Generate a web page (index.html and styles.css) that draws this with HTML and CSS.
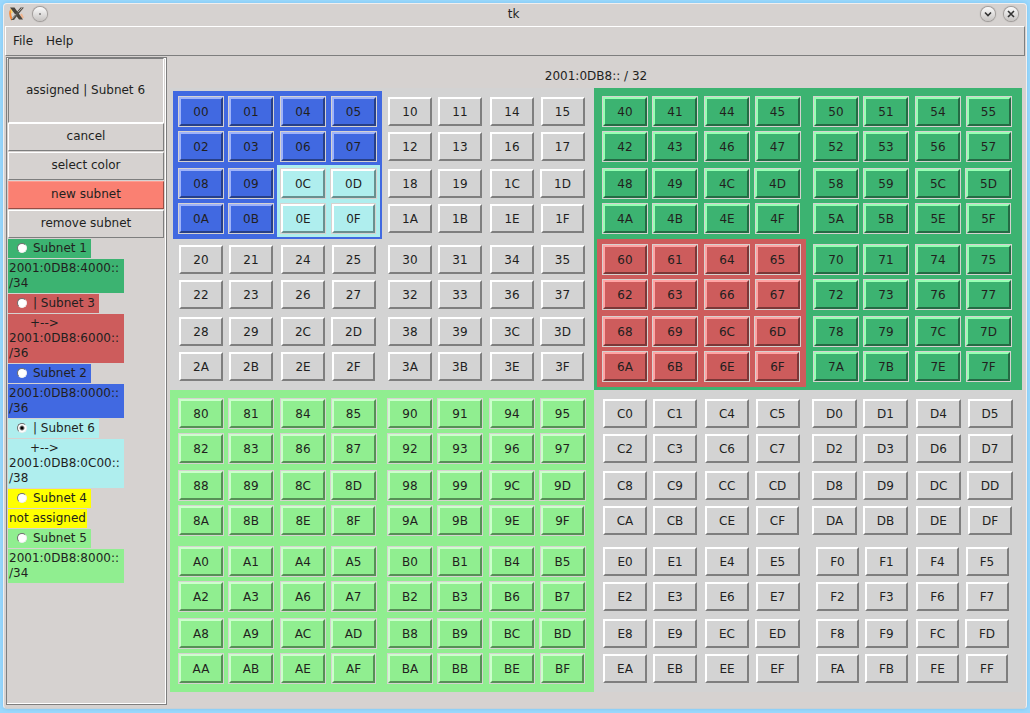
FILE: index.html
```
<!DOCTYPE html>
<html lang="en">
<head>
<meta charset="utf-8">
<title>tk</title>
<link rel="stylesheet" href="styles.css">
</head>
<body>
<div class="window">
  <header class="titlebar">
    <div class="titlebar-side">
      <svg class="app-icon" width="16" height="16" viewBox="0 0 16 16" aria-hidden="true">
        <path d="M3 3C0 6 1 10 3 14" fill="none" stroke="#f58a3c" stroke-width="2"/>
        <path d="M3 2C2 4 2 5 3 7" fill="none" stroke="#f7d06a" stroke-width="2"/>
        <path d="M12 8l2 4" stroke="#f2b48c" stroke-width="2"/>
        <path d="M1 1.500h4.500l8.500 12h-4z" fill="#4a443c"/>
        <path d="M11.500 1.500H15L9.500 8 5 14H2l5-7z" fill="#55514b"/>
        <path d="M9 6l4-4M3 13l4-5" stroke="#aaa6a0" stroke-width="1"/>
      </svg>
      <button class="round" type="button" aria-label="On all desktops"><svg width="14" height="14" viewBox="0 0 14 14"><circle cx="7" cy="7" r="0.8" fill="#333"/></svg></button>
    </div>
    <div class="window-title">tk</div>
    <div class="titlebar-side titlebar-end">
      <button class="round" type="button" aria-label="Minimize"><svg width="14" height="14" viewBox="0 0 14 14"><path d="M4 5.500l3 3 3-3" fill="none" stroke="#333" stroke-width="1.6"/></svg></button>
      <button class="round" type="button" aria-label="Close"><svg width="14" height="14" viewBox="0 0 14 14"><path d="M4 4l6 6M10 4l-6 6" fill="none" stroke="#333" stroke-width="1.6"/></svg></button>
    </div>
  </header>
  <nav class="menubar">
    <button type="button">File</button>
    <button type="button">Help</button>
  </nav>
  <div class="content">
    <aside class="sidebar">
      <div class="status">assigned | Subnet 6</div>
      <button class="action" type="button">cancel</button>
      <button class="action" type="button">select color</button>
      <button class="action salmon" type="button">new subnet</button>
      <button class="action" type="button">remove subnet</button>
      <div class="subnets">
        <label class="subnet green"><input type="radio" name="subnet">Subnet 1</label>
        <div class="address green">2001:0DB8:4000::<br>/34</div>
        <label class="subnet red"><input type="radio" name="subnet">| Subnet 3</label>
        <div class="address red"><span class="branch">+--&gt;</span>2001:0DB8:6000::<br>/36</div>
        <label class="subnet blue"><input type="radio" name="subnet">Subnet 2</label>
        <div class="address blue">2001:0DB8:0000::<br>/36</div>
        <label class="subnet turquoise"><input type="radio" name="subnet" checked>| Subnet 6</label>
        <div class="address turquoise"><span class="branch">+--&gt;</span>2001:0DB8:0C00::<br>/38</div>
        <label class="subnet yellow"><input type="radio" name="subnet">Subnet 4</label>
        <div class="address short yellow">not assigned</div>
        <label class="subnet lime"><input type="radio" name="subnet">Subnet 5</label>
        <div class="address lime">2001:0DB8:8000::<br>/34</div>
      </div>
    </aside>
    <main class="main">
      <h1 class="prefix">2001:0DB8:: / 32</h1>
      <div class="map" id="map"></div>
    </main>
  </div>
</div>
<script src="map.js"></script>
</body>
</html>
```
FILE: map.js
```
// Assigned blocks, keyed by first address and prefix length.
const assigned = {
  "40/34": "green",
  "60/36": "red",
  "00/36": "blue",
  "0C/38": "turquoise",
  "80/34": "lime"
};

function hex(value) {
  return value.toString(16).toUpperCase().padStart(2, "0");
}

// Splits a block into four quarters until single cells remain.
function fill(parent, start, size, prefix) {
  const quarter = size / 4;
  for (let i = 0; i < 4; i++) {
    const first = start + i * quarter;
    const name = hex(first);
    if (quarter === 1) {
      const cell = document.createElement("button");
      cell.type = "button";
      cell.className = "cell lead-" + name[0] + " tail-" + name[1];
      cell.textContent = name;
      parent.append(cell);
    } else {
      const block = document.createElement("div");
      const color = assigned[name + "/" + prefix];
      block.className = "block block-" + prefix + (color ? " " + color : "");
      parent.append(block);
      fill(block, first, quarter, prefix + 2);
    }
  }
}

fill(document.getElementById("map"), 0, 256, 34);
```
FILE: styles.css
```
* {
  box-sizing: border-box;
}

:root {
  --face: #d6d2d0;
  --fill: #d3d3d3;
  --light: #ffffff;
  --dark: #7e7e7e;
  --ring: #d3d3d3;
}

body {
  margin: 0;
  padding: 3px 3px 4px;
  min-height: 100vh;
  display: flex;
  background: #9cd8fc;
  color: #221f1e;
  font: 12px/15px "DejaVu Sans", sans-serif;
}

button {
  font: inherit;
  color: inherit;
  padding: 0;
}

.green { --fill: #3cb371; --light: #98ffb4; --dark: #246b44; --ring: #d6d2d0; }
.red { --fill: #cd5c5c; --light: #ffa4a4; --dark: #7b3737; --ring: #d6d2d0; }
.blue { --fill: #4169e1; --light: #9fb3fa; --dark: #273f87; --ring: #d6d2d0; }
.turquoise { --fill: #afeeee; --light: #ffffff; --dark: #698f8f; --ring: #d6d2d0; }
.lime { --fill: #90ee90; --light: #ccffcc; --dark: #568f56; --ring: #d6d2d0; }
.yellow { --fill: #ffff00; }

.window {
  flex: 1;
  display: flex;
  flex-direction: column;
  background: var(--face);
  border: 1px solid #f1efee;
  border-bottom-color: #c9d0d4;
  border-radius: 4px;
  padding: 0 1px 3px;
  box-shadow: 0 0 4px #7cc4f0;
}

.titlebar {
  display: flex;
  align-items: center;
  height: 22px;
  padding: 0 7px 2px 4px;
}

.titlebar-side {
  flex: 1;
  display: flex;
  align-items: center;
  gap: 8px;
}

.titlebar-end {
  justify-content: flex-end;
  gap: 9px;
}

.round {
  width: 14px;
  height: 14px;
  border: 0;
  border-radius: 50%;
  background: linear-gradient(#fbfbfb, #c6c3c1);
  box-shadow: 0 0 1px 1px #9a9694;
}

.round svg {
  display: block;
}

.menubar {
  display: flex;
  align-items: center;
  gap: 13px;
  height: 30px;
  padding: 0 7px;
  border: 1px solid;
  border-color: #ffffff #7e7e7e #7e7e7e #ffffff;
}

.menubar button {
  border: 0;
  background: none;
}

.content {
  flex: 1;
  display: flex;
  gap: 3px;
  padding: 1px 3px 0 1px;
}

.sidebar {
  width: 161px;
  padding: 0 2px 0 1px;
  border: 1px solid #7e7e7e;
  box-shadow: inset -1px -1px #ffffff, inset 0 1px #ffffff;
}

.status {
  display: flex;
  align-items: center;
  justify-content: center;
  height: 65px;
  padding-right: 1px;
  border: 1px solid;
  border-color: #7e7e7e #ffffff #ffffff #7e7e7e;
}

.action {
  display: block;
  width: 100%;
  height: 28px;
  margin-bottom: 1px;
  padding-bottom: 2px;
  background: var(--face);
  border: 1px solid;
  border-color: #ffffff #7e7e7e #7e7e7e #ffffff;
}

.action.salmon {
  background: #fa8072;
  border-color: #ff9c90 #964d44 #964d44 #ff9c90;
}

.subnets {
  display: flex;
  flex-direction: column;
  align-items: flex-start;
  gap: 1px;
}

.subnet {
  display: flex;
  align-items: center;
  height: 19px;
  padding: 0 4px 0 9px;
  background: var(--fill);
}

.subnet input {
  appearance: none;
  width: 10px;
  height: 10px;
  margin: 0 6px 1px 0;
  border: 1px solid;
  border-color: #6d6d6d #eeeeee #eeeeee #6d6d6d;
  border-radius: 50%;
  background: #ffffff;
}

.subnet input:checked {
  background: radial-gradient(circle, #000000 1px, #ffffff 3px);
}

.address {
  width: 116px;
  padding: 2px 1px;
  background: var(--fill);
}

.address.short {
  width: auto;
}

.branch {
  display: block;
  padding-left: 21px;
}

.main {
  flex: 1;
  padding-top: 12px;
}

.prefix {
  margin: 0;
  padding-bottom: 4px;
  font: inherit;
  text-align: center;
}

.map,
.block {
  display: grid;
  grid-template-columns: auto auto;
  background: var(--fill);
}

.map,
.block-34 {
  grid-template-columns: auto 1fr;
}

.block-34 {
  padding: 3px;
}

.block-36 {
  padding: 2px;
  justify-content: center;
}

.block-38 {
  padding: 1px;
}

.cell {
  --lead: 0px;
  --tail: 0px;
  width: calc(44px + var(--lead) + var(--tail));
  height: 29px;
  margin: 3px;
  padding-top: 1px;
  background: var(--fill);
  border: 2px solid;
  border-color: var(--light) var(--dark) var(--dark) var(--light);
  box-shadow: 0 0 0 1px var(--ring);
}

.lead-D { --lead: 1px; }
.lead-F { --lead: -1px; }
.tail-D { --tail: 1px; }
.tail-F { --tail: -1px; justify-self: center; }
```
